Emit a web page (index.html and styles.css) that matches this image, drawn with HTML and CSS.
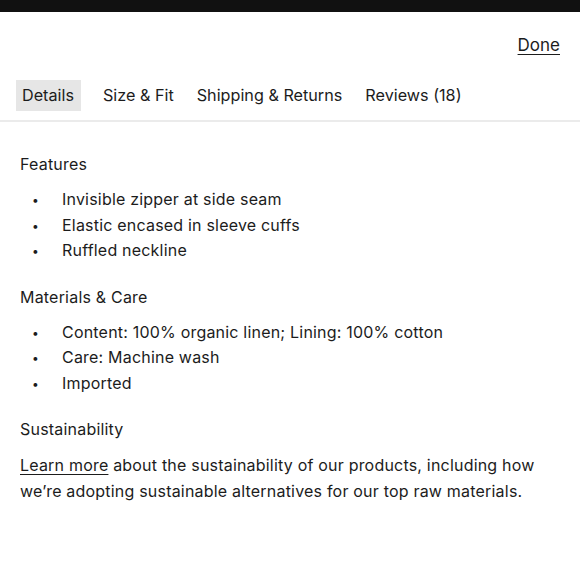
FILE: index.html
```html
<!DOCTYPE html>
<html lang="en">
<head>
    <meta charset="UTF-8">
    <meta name="viewport" content="width=device-width, initial-scale=1.0">
    <title>Product Details</title>
    <link rel="stylesheet" href="styles.css">
</head>
<body>
    <div class="topbar"></div>

    <div class="header">
        <a href="#" class="done">Done</a>
    </div>

    <nav class="tabs">
        <a href="#" class="tab active">Details</a>
        <a href="#" class="tab">Size &amp; Fit</a>
        <a href="#" class="tab">Shipping &amp; Returns</a>
        <a href="#" class="tab">Reviews (18)</a>
    </nav>

    <div class="content">
        <h2>Features</h2>
        <ul>
            <li>Invisible zipper at side seam</li>
            <li>Elastic encased in sleeve cuffs</li>
            <li>Ruffled neckline</li>
        </ul>

        <h2>Materials &amp; Care</h2>
        <ul>
            <li>Content: 100% organic linen; Lining: 100% cotton</li>
            <li>Care: Machine wash</li>
            <li>Imported</li>
        </ul>

        <h2>Sustainability</h2>
        <p><a href="#">Learn more</a> about the sustainability of our products, including how we’re adopting sustainable alternatives for our top raw materials.</p>
    </div>
</body>
</html>
```

FILE: styles.css
```css
body {
    margin: 0;
    font-family: Inter, "Open Sans", sans-serif;
    font-size: 16px;
    letter-spacing: 0.2px;
    color: #1c1c1c;
    background: #fff;
}
a {
    color: #1c1c1c;
}
.topbar {
    height: 12px;
    background-color: #111;
}
.header {
    display: flex;
    justify-content: flex-end;
    padding: 23px 20px 0 0;
}
.done {
    font-size: 17px;
    line-height: 20px;
    letter-spacing: 0;
    text-decoration: underline;
    text-underline-offset: 3px;
}
.tabs {
    display: flex;
    gap: 11px;
    padding: 25px 16px 9px;
    border-bottom: 2px solid #ebebeb;
}
.tab {
    padding: 6px;
    line-height: 19px;
    font-size: 16.2px;
    letter-spacing: 0;
    text-decoration: none;
}
.tab.active {
    padding: 6px 7px 6px 6px;
    margin-right: 5px;
    background-color: #e6e6e6;
}
.content {
    padding: 30px 20px;
}
h2 {
    font-size: 16px;
    font-weight: normal;
    margin: 0 0 11px;
    line-height: 24px;
}
ul {
    list-style: none;
    margin: 0 0 21px;
    padding: 0;
}
li {
    display: flex;
    line-height: 25.5px;
}
li::before {
    content: "•";
    width: 42px;
    padding-left: 12px;
    box-sizing: border-box;
    font-size: 12px;
    flex-shrink: 0;
}
p {
    margin: 0;
    line-height: 26px;
}
p a {
    text-underline-offset: 3px;
}
```
